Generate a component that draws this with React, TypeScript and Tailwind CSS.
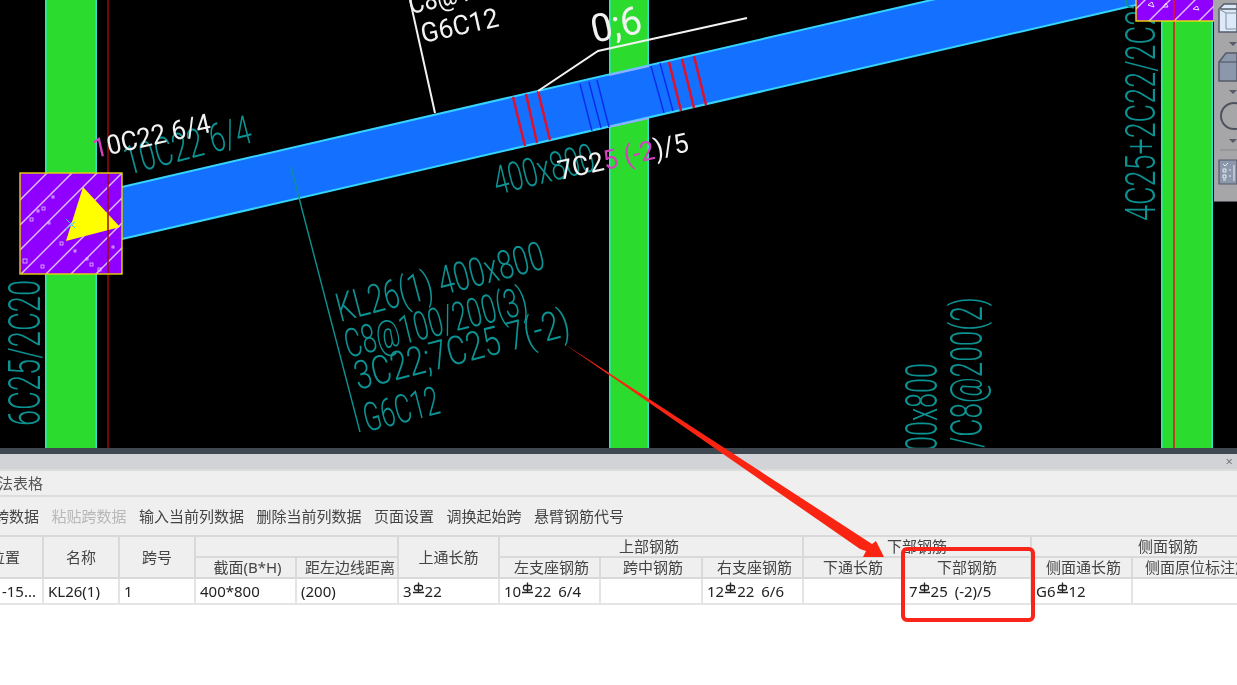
const TEAL = '#0c9292'
const WHITE = '#f2f2f2'
const PINK = '#d640c0'

const CAD_FONT = "Roboto, 'Liberation Sans', sans-serif"

// one label of the drawing: start point, end point and size
function CadText({
  x1,
  y1,
  x2,
  y2,
  size,
  color = TEAL,
  weight = 300,
  children,
}: {
  x1: number
  y1: number
  x2: number
  y2: number
  size: number
  color?: string
  weight?: number
  children: React.ReactNode
}) {
  const angle = (Math.atan2(y2 - y1, x2 - x1) * 180) / Math.PI
  const length = Math.hypot(x2 - x1, y2 - y1)
  return (
    <text
      transform={`translate(${x1} ${y1}) rotate(${angle})`}
      fontFamily={CAD_FONT}
      fontSize={size}
      fontWeight={weight}
      fill={color}
      textLength={length}
      lengthAdjust="spacingAndGlyphs"
    >
      {children}
    </text>
  )
}

const HATCH = [-60, -35, -10, 15, 40, 65, 90, 115, 140, 165, 190, 215]
const SPECKS = [
  [30, 218, 3],
  [37, 210, 2],
  [42, 207, 3],
  [82, 198, 4],
  [48, 222, 2],
  [60, 242, 3],
  [41, 265, 3],
  [23, 259, 4],
  [90, 263, 3],
  [98, 268, 3],
  [86, 258, 2],
  [112, 246, 2],
  [52, 196, 2],
  [74, 250, 2],
]

function Column({ x, w }: { x: number; w: number }) {
  return (
    <>
      <rect x={x} y={0} width={w} height={448} fill="#2bdc2f" />
      <rect x={x} y={0} width={1.5} height={448} fill="#35e0d0" />
      <rect x={x + w - 1.5} y={0} width={1.5} height={448} fill="#35e0d0" />
    </>
  )
}

const RED_BARS = [
  [513, 97, 525, 146],
  [526, 94, 537, 143],
  [538, 91, 550, 140],
  [669, 62, 681, 111],
  [682, 59, 694, 108],
  [694, 56, 706, 105],
]
const BLUE_BARS = [
  [580, 84, 592, 131],
  [589, 82, 601, 128],
  [597, 80, 609, 127],
  [651, 66, 664, 113],
  [660, 63, 673, 111],
]

function CadDrawing() {
  return (
    <svg width={1237} height={448} viewBox="0 0 1237 448" className="block">
      <defs>
        <clipPath id="colLeft">
          <rect x={20} y={173} width={102} height={101} />
        </clipPath>
        <clipPath id="colRight">
          <rect x={1136} y={-80} width={78} height={101} />
        </clipPath>
      </defs>
      <rect width={1237} height={448} fill="#000" />

      <Column x={45} w={52} />
      <Column x={609} w={40} />
      <Column x={1161} w={52} />
      <line x1={108} y1={0} x2={108} y2={448} stroke="#a00808" strokeWidth={1.5} />
      <line x1={1174} y1={0} x2={1174} y2={448} stroke="#e8101e" strokeWidth={1.5} />

      {/* beam */}
      <polygon points="110,242 110,190 1136,-47 1136,5" fill="#1470ff" />
      <line x1={122} y1={187} x2={940} y2={-2} stroke="#35d5ff" strokeWidth={2} />
      <line x1={122} y1={239} x2={1136} y2={5} stroke="#35d5ff" strokeWidth={2} />
      <line x1={609} y1={75} x2={649} y2={66} stroke="#8fb0ff" strokeWidth={2} />
      <line x1={609} y1={127} x2={649} y2={118} stroke="#8fb0ff" strokeWidth={2} />

      {RED_BARS.map(([a, b, c, d]) => (
        <line key={a} x1={a} y1={b} x2={c} y2={d} stroke="#e0102a" strokeWidth={2.5} />
      ))}
      {BLUE_BARS.map(([a, b, c, d]) => (
        <line key={a} x1={a} y1={b} x2={c} y2={d} stroke="#0a28f0" strokeWidth={1.4} />
      ))}

      {/* left column head */}
      <rect x={20} y={173} width={102} height={101} fill="#9000ff" />
      <g clipPath="url(#colLeft)">
        {HATCH.map((o) => (
          <line
            key={o}
            x1={o}
            y1={280}
            x2={o + 115}
            y2={165}
            stroke="#e0c0ff"
            strokeWidth={1.4}
          />
        ))}
        {SPECKS.map(([x, y, s]) => (
          <rect
            key={`${x}-${y}`}
            x={x}
            y={y}
            width={s}
            height={s}
            fill="none"
            stroke="#e6c8ff"
            strokeWidth={0.8}
          />
        ))}
      </g>
      <polygon points="83,187 120,227 66,241" fill="#ffff00" />
      <line x1={108} y1={173} x2={108} y2={274} stroke="#a00808" strokeWidth={1.5} />
      <rect x={20} y={173} width={102} height={101} fill="none" stroke="#e8d800" strokeWidth={1.4} />
      <path d="M66 219 L75 228 M66 229 L75 222" stroke="#35c0ff" strokeWidth={1} />

      {/* right column head */}
      <CadText x1={1155} y1={221} x2={1155} y2={-6} size={42}>
        4C25+2C22/2C22
      </CadText>
      <rect x={1136} y={-80} width={78} height={101} fill="#9000ff" />
      <g clipPath="url(#colRight)">
        {[1090, 1115, 1140, 1165, 1190, 1215].map((o) => (
          <line
            key={o}
            x1={o}
            y1={30}
            x2={o + 40}
            y2={-10}
            stroke="#e0c0ff"
            strokeWidth={1.4}
          />
        ))}
      </g>
      <path d="M1148 5 l4 -3 l2 5 z M1163 7 l3 -4 l2 4 z M1193 9 l4 -3 l2 4 z" fill="none" stroke="#f0e0ff" strokeWidth={1} />
      <line x1={1174} y1={0} x2={1174} y2={21} stroke="#e8101e" strokeWidth={1.5} />
      <rect x={1136} y={-80} width={78} height={101} fill="none" stroke="#f0e000" strokeWidth={1.4} />

      {/* leaders */}
      <line x1={410} y1={0} x2={435} y2={113} stroke={WHITE} strokeWidth={2} />
      <polyline points="538,91 598,51 747,18" fill="none" stroke={WHITE} strokeWidth={2} />
      <line x1={291} y1={167} x2={360} y2={432} stroke={TEAL} strokeWidth={1.4} />

      {/* teal labels */}
      <CadText x1={340} y1={322} x2={547} y2={268} size={40}>
        KL26(1) 400x800
      </CadText>
      <CadText x1={348} y1={358} x2={530} y2={313} size={40}>
        C8@100/200(3)
      </CadText>
      <CadText x1={358} y1={390} x2={572} y2={335} size={40}>
        3C22;7C25 7(-2)
      </CadText>
      <CadText x1={367} y1={432} x2={442} y2={413} size={40}>
        G6C12
      </CadText>
      <CadText x1={128} y1={175} x2={254} y2={142} size={40}>
        10C22 6/4
      </CadText>
      <CadText x1={497} y1={195} x2={597} y2={170} size={40}>
        400x800
      </CadText>
      <CadText x1={40} y1={426} x2={40} y2={280} size={44}>
        6C25/2C20
      </CadText>
      <CadText x1={937} y1={466} x2={937} y2={363} size={44}>
        400x800
      </CadText>
      <CadText x1={982} y1={448} x2={982} y2={297} size={44}>
        /C8@200(2)
      </CadText>

      {/* white labels */}
      <CadText x1={95} y1={158} x2={212} y2={132} size={27} color={WHITE} weight={400}>
        <tspan fill={PINK}>1</tspan>0C22 6/4
      </CadText>
      <CadText x1={411} y1={14} x2={575} y2={-24} size={27} color={WHITE} weight={400}>
        C8@100/200(3)
      </CadText>
      <CadText x1={423} y1={43} x2={500} y2={26} size={27} color={WHITE} weight={400}>
        G6C12
      </CadText>
      <CadText x1={594} y1={43} x2={644} y2={32} size={39} color={WHITE} weight={400}>
        0;6
      </CadText>
      <CadText x1={560} y1={180} x2={690} y2={151} size={27} color={WHITE} weight={400}>
        7C2<tspan fill={PINK}>5 (-2</tspan>)/5
      </CadText>

      {/* side toolbar */}
      <rect x={1214} y={0} width={23} height={201} fill="#a6a6a8" />
      <rect x={1214} y={201} width={23} height={1} fill="#55585c" />
      <path d="M1219 9 L1224 4 H1237 V32 H1219 Z" fill="#dbe9f8" stroke="#555b68" strokeWidth={1.5} />
      <path d="M1219 9 H1237" stroke="#555b68" strokeWidth={1.5} />
      <path d="M1219 9 L1226 13 H1237 M1226 13 V29 H1237" fill="none" stroke="#8090a0" strokeWidth={1} />
      <polygon points="1229,42 1237,42 1233,46" fill="#555b68" />
      <path d="M1219 62 L1226 53 H1237 V81 H1219 Z" fill="#8b97aa" stroke="#555b68" strokeWidth={1.5} />
      <path d="M1219 62 H1237" stroke="#555b68" strokeWidth={1.2} />
      <polygon points="1229,90 1237,90 1233,94" fill="#555b68" />
      <circle cx={1234} cy={116} r={13} fill="none" stroke="#4d535e" strokeWidth={2} />
      <polygon points="1229,139 1237,139 1233,143" fill="#555b68" />
      <line x1={1220} y1={150} x2={1237} y2={150} stroke="#8a8a8a" strokeWidth={1} />
      <path d="M1219 160 H1237 V184 H1219 Z" fill="#8b97aa" stroke="#555b68" strokeWidth={1.2} />
      <path d="M1223 164 l2 2 l3 -3 M1223 169 h3 v3 h-3 z M1223 175 h3 v3 h-3 z M1223 180 h3 M1229 170 h2 M1229 176 h2 M1234 165 v16" fill="none" stroke="#e8ecf2" strokeWidth={1} />
    </svg>
  )
}

function RebarMark() {
  return (
    <svg width={13} height={15} viewBox="0 0 13 15" className="mb-[5px] inline-block align-middle">
      <rect x={2.5} y={3.5} width={8} height={4.5} rx={1.5} fill="none" stroke="#222" strokeWidth={1.3} />
      <path d="M6.5 0.5 V10.5 M1 10.5 H12" fill="none" stroke="#222" strokeWidth={1.3} />
    </svg>
  )
}

function Rebar({ before, after }: { before: string; after: string }) {
  return (
    <>
      {before}
      <RebarMark />
      {after}
    </>
  )
}

const headCell =
  'flex items-center justify-center whitespace-nowrap border-r-2 border-b-2 border-[#d9d9d9] bg-[#efefef] text-[#444]'
const dataCell =
  'flex items-center overflow-hidden whitespace-nowrap border-r-2 border-b-2 border-[#e4e4e4] pl-1 pt-px text-[#222] [word-spacing:3px]'

function RebarTable() {
  return (
    <div className="-ml-[32px] grid w-[1300px] grid-cols-[76px_76px_76px_101px_102px_101px_101px_102px_101px_100px_128px_101px_135px] grid-rows-[21px_21px_26px] bg-white">
      <div className={`${headCell} row-span-2`}>位置</div>
      <div className={`${headCell} row-span-2`}>名称</div>
      <div className={`${headCell} row-span-2`}>跨号</div>
      <div className={`${headCell} col-span-2`} />
      <div className={`${headCell} row-span-2`}>上通长筋</div>
      <div className={`${headCell} col-span-3 pr-1`}>上部钢筋</div>
      <div className={`${headCell} col-span-2`}>下部钢筋</div>
      <div className={`${headCell} col-span-2 justify-start pl-[106px]`}>侧面钢筋</div>

      <div className={`${headCell} pl-1`}>截面(B*H)</div>
      <div className={`${headCell} pl-[6px]`}>距左边线距离</div>
      <div className={`${headCell} pl-1`}>左支座钢筋</div>
      <div className={`${headCell} pl-1`}>跨中钢筋</div>
      <div className={`${headCell} pl-1`}>右支座钢筋</div>
      <div className={headCell}>下通长筋</div>
      <div className={headCell}>下部钢筋</div>
      <div className={`${headCell} pl-1`}>侧面通长筋</div>
      <div className={`${headCell} justify-start pl-3`}>侧面原位标注筋</div>

      <div className={`${dataCell} justify-end pr-[6px]`}>1-15...</div>
      <div className={dataCell}>KL26(1)</div>
      <div className={dataCell}>1</div>
      <div className={dataCell}>400*800</div>
      <div className={dataCell}>(200)</div>
      <div className={dataCell}>
        <Rebar before="3" after="22" />
      </div>
      <div className={dataCell}>
        <Rebar before="10" after="22 6/4" />
      </div>
      <div className={dataCell} />
      <div className={dataCell}>
        <Rebar before="12" after="22 6/6" />
      </div>
      <div className={dataCell} />
      <div className={`${dataCell} pl-[5px]`}>
        <Rebar before="7" after="25 (-2)/5" />
      </div>
      <div className={dataCell}>
        <Rebar before="G6" after="12" />
      </div>
      <div className={dataCell} />
    </div>
  )
}

export default function App() {
  return (
    <div className="relative flex h-[685px] w-[1237px] flex-col overflow-hidden bg-white font-['Noto_Sans','Noto_Sans_CJK_SC',sans-serif] text-[15px] blur-[0.4px]">
      <CadDrawing />

      <div className="h-[6px] bg-[#3f4850]" />
      <div className="flex h-[15px] items-center justify-end bg-[#d2d3d7] pr-1 text-[13px] leading-none text-[#777]">
        ×
      </div>
      <div className="flex h-[28px] items-center whitespace-nowrap border-y-2 border-[#dcdcdc] bg-[#efefef] text-[#555]">
        <span className="-ml-[32px]">梁平法表格</span>
      </div>
      <div className="flex h-[40px] items-center gap-[12.5px] whitespace-nowrap border-b-2 border-[#d9d9d9] bg-[#efefef] text-[#444]">
        <span className="-ml-[36px]">复制跨数据</span>
        <span className="text-[#b8b8b8]">粘贴跨数据</span>
        <span>输入当前列数据</span>
        <span>删除当前列数据</span>
        <span>页面设置</span>
        <span>调换起始跨</span>
        <span>悬臂钢筋代号</span>
      </div>
      <RebarTable />

      {/* annotations pasted over the screenshot */}
      <svg
        width={1237}
        height={685}
        viewBox="0 0 1237 685"
        className="pointer-events-none absolute inset-0"
      >
        <polygon
          points="563,343 872,544 876,541 884,557 863,557 866,551 860,549"
          fill="#fa2412"
        />
      </svg>
      <div className="pointer-events-none absolute left-[901px] top-[547px] h-[75px] w-[134px] rounded-md border-4 border-[#f8261a]" />
    </div>
  )
}
